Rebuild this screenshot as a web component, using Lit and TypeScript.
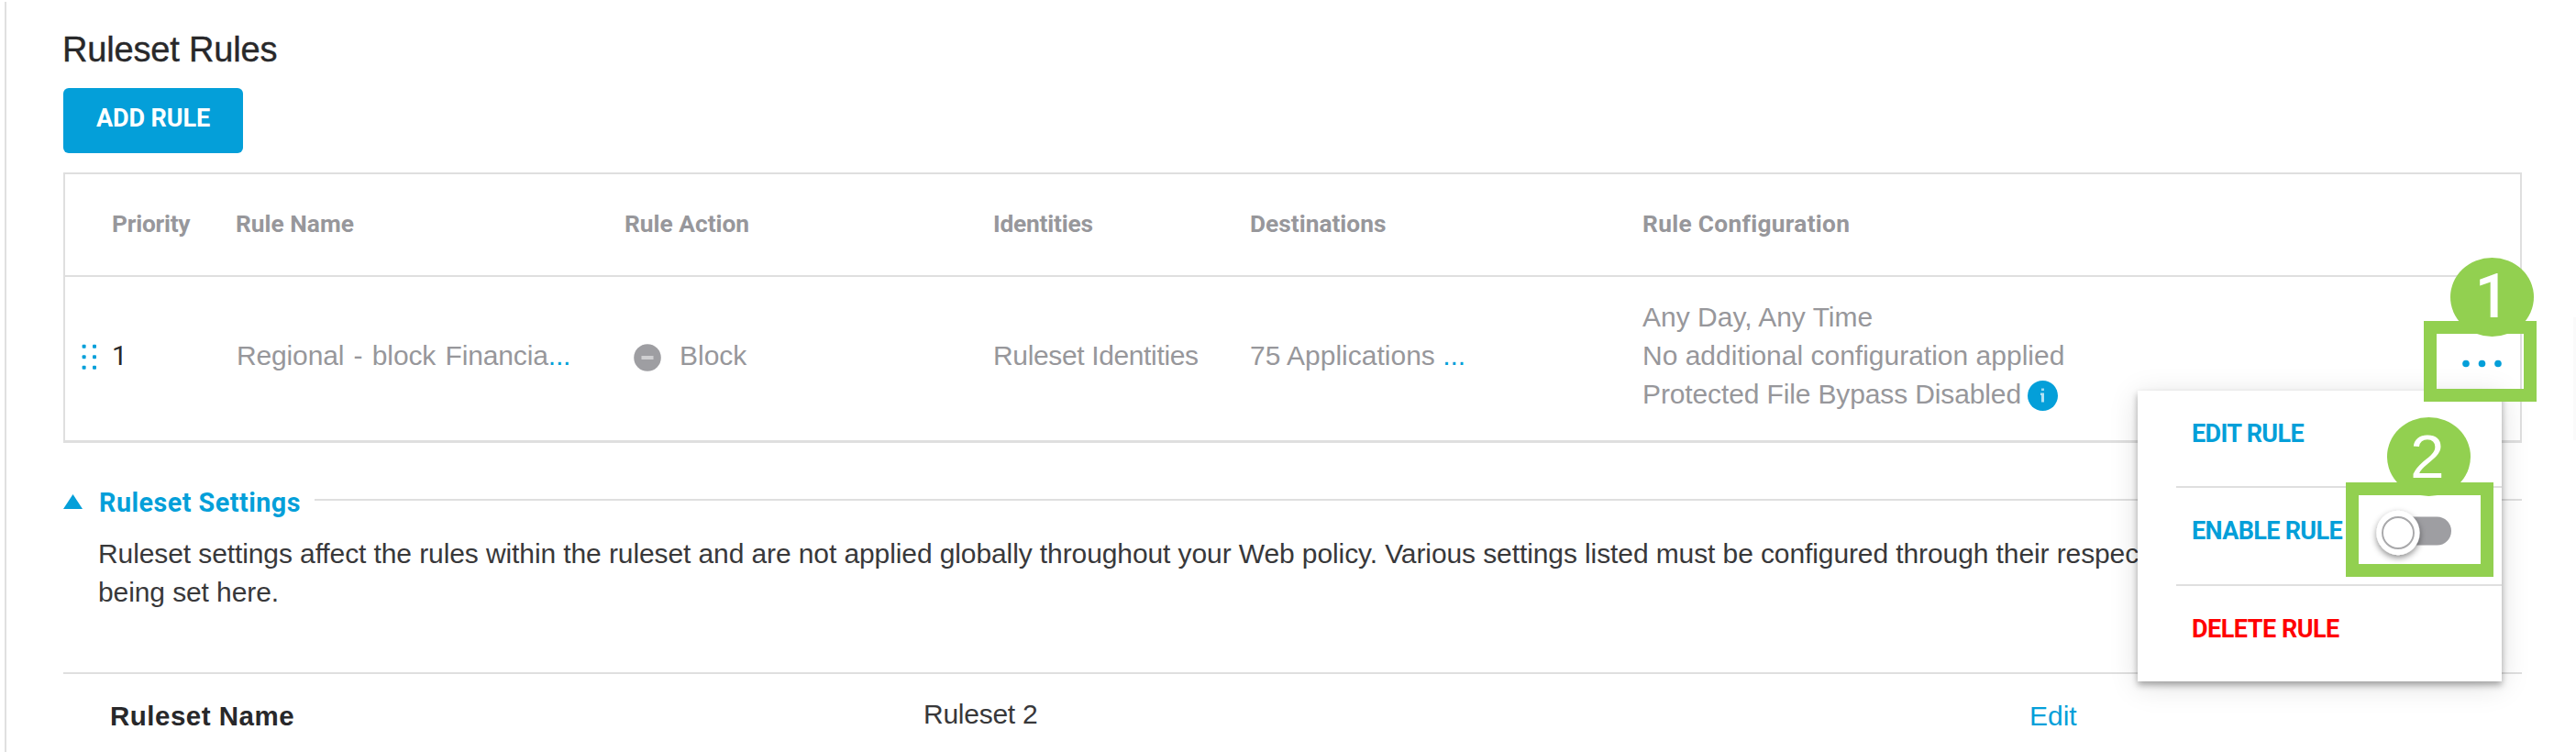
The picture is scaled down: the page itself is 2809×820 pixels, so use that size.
import { LitElement, html, css } from "lit";
import { customElement } from "lit/decorators.js";

@customElement("rule-menu")
class RuleMenu extends LitElement {
  static styles = css`
    :host {
      display: block;
      box-sizing: border-box;
      width: 397px;
      height: 317px;
      padding-left: 42px;
      background: #fff;
      box-shadow: 0 4px 7px rgba(0, 0, 0, 0.32), 0 5px 30px rgba(0, 0, 0, 0.13);
      font-family: Roboto, sans-serif;
    }
    .item {
      box-sizing: border-box;
      height: 106.5px;
      padding: 0 0 10px 17px;
      display: flex;
      align-items: center;
      font-weight: 700;
      font-size: 27px;
      line-height: 32px;
      letter-spacing: -0.66px;
      white-space: nowrap;
      color: #049fd9;
    }
    .item:first-child {
      height: 104px;
    }
    .item + .item {
      border-top: 2px solid #dfdfdf;
    }
    .danger {
      color: #f00;
      letter-spacing: -0.5px;
    }
    .toggle {
      display: block;
      margin: 6px 0 0 30px;
      overflow: visible;
    }
  `;
  render() {
    return html`
      <div class="item">EDIT RULE</div>
      <div class="item">
        <span>ENABLE RULE</span>
        <svg class="toggle" width="90" height="60" viewBox="0 0 90 60">
          <defs>
            <filter id="s" x="-40%" y="-40%" width="180%" height="190%">
              <feDropShadow dx="0" dy="3" stdDeviation="3.5" flood-color="#000" flood-opacity="0.45" />
            </filter>
          </defs>
          <rect x="17" y="11.5" width="72" height="31" rx="15.5" fill="#9e9ea2" />
          <ellipse cx="31" cy="29" rx="23.6" ry="24.2" fill="#fff" filter="url(#s)" />
          <circle cx="31" cy="29" r="17" fill="#fff" stroke="#a8a8aa" stroke-width="1.9" />
        </svg>
      </div>
      <div class="item danger">DELETE RULE</div>
    `;
  }
}

@customElement("app-root")
class AppRoot extends LitElement {
  static styles = css`
    :host {
      display: block;
      position: relative;
      box-sizing: border-box;
      width: 100%;
      height: 820px;
      padding: 2px 0 0 4.5px;
      overflow: hidden;
      background: #fff;
      font-family: "Liberation Sans", Arial, sans-serif;
      font-size: 30px;
      line-height: 42px;
      color: #38383a;
    }
    .page {
      box-sizing: border-box;
      height: 818px;
      border-left: 2px solid #e0e0e0;
      padding: 29px 59px 0 62.5px;
    }
    h1 {
      margin: 0;
      padding-top: 1px;
      margin-left: -1px;
      font-weight: 400;
      font-size: 38px;
      line-height: 44px;
      letter-spacing: -0.17px;
      color: #28282a;
      -webkit-text-stroke: 0.4px #28282a;
    }
    .add {
      display: flex;
      align-items: center;
      justify-content: center;
      box-sizing: border-box;
      width: 196px;
      height: 71px;
      margin: 20px 0 0;
      padding: 0 0 5px;
      border: 0;
      border-radius: 6px;
      background: #049fd9;
      color: #fff;
      font: 700 27px/32px Roboto, sans-serif;
      letter-spacing: -0.1px;
    }
    .table {
      box-sizing: border-box;
      height: 295px;
      margin-top: 21px;
      border: 2px solid #dfdfdf;
      border-bottom-width: 3px;
    }
    .row {
      display: grid;
      grid-template-columns: 50px 136px 424px 402px 280px 428px 1fr;
      align-items: center;
      box-sizing: border-box;
      white-space: nowrap;
    }
    .head {
      height: 112px;
      padding-bottom: 3px;
      border-bottom: 2px solid #dfdfdf;
      font: 700 26.3px/32px Roboto, sans-serif;
      color: #97979b;
    }
    .body {
      height: 178px;
      padding-bottom: 6px;
      color: #97979b;
    }
    .tight { letter-spacing: -0.22px; }
    .prio { padding-left: 1px; }
    .loose { letter-spacing: 0.3px; }
    .num {
      font-family: Roboto, sans-serif;
      font-size: 29.5px;
      color: #28282a;
      padding-left: 1px;
    }
    .grip {
      display: block;
      margin: 2px 0 0 18px;
    }
    .name { padding-left: 1px; letter-spacing: -0.15px; word-spacing: 2.2px; }
    .more { color: #049fd9; }
    .ident { letter-spacing: -0.36px; }
    .action {
      display: flex;
      align-items: center;
      gap: 20px;
      padding-left: 10px;
    }
    .minus { margin-top: 3px; }
    .by { display: flex; align-items: center; gap: 7px; letter-spacing: -0.13px; }
    .info { margin-top: 3px; }
    .settings {
      display: flex;
      align-items: center;
      height: 42px;
      margin-top: 41px;
    }
    .tri { margin: 3px 18px 0 0; }
    .legend {
      font: 700 28.7px/42px Roboto, sans-serif;
      letter-spacing: 0.5px;
      color: #049fd9;
      padding-top: 5px;
    }
    .rule {
      flex: 1;
      height: 2px;
      margin-left: 15px;
      background: #dfdfdf;
    }
    .desc {
      margin: 17px 0 0 38px;
      letter-spacing: -0.1px;
      white-space: nowrap;
    }
    .fields {
      display: grid;
      grid-template-columns: 888px 1206px 1fr;
      box-sizing: border-box;
      margin-top: 66px;
      padding: 25px 0 0 50px;
      border-top: 2px solid #dfdfdf;
    }
    .label {
      font-weight: 700;
      font-size: 29.5px;
      letter-spacing: 0.5px;
      color: #28282a;
      padding-left: 1px;
    }
    .value { margin-top: -2px; letter-spacing: -0.26px; }
    .edit { color: #049fd9; }
    .edge {
      position: absolute;
      right: 0;
      top: 346px;
      width: 3px;
      height: 134px;
      background: #fafafa;
    }
    .menu {
      position: absolute;
      left: 2331px;
      top: 426px;
    }
    .dots {
      position: absolute;
      left: 2684px;
      top: 391px;
    }
    .box {
      position: absolute;
      box-sizing: border-box;
      border: 14px solid #92d050;
    }
    .box1 { left: 2643px; top: 350px; width: 123px; height: 88px; }
    .box2 { left: 2558px; top: 526px; width: 161px; height: 103px; }
    .badge {
      position: absolute;
      display: flex;
      align-items: center;
      justify-content: center;
      box-sizing: border-box;
      width: 91px;
      height: 86px;
      border-radius: 50%;
      background: #92d050;
      color: #fff;
      font-size: 67px;
      line-height: 86px;
    }
    .b1 { left: 2672px; top: 281px; font-family: Roboto, sans-serif; font-size: 66px; font-weight: 500; }
    .b2 { left: 2603px; top: 455px; padding-right: 3px; }
  `;
  render() {
    const blue = "#049fd9";
    return html`
      <div class="page">
        <h1>Ruleset Rules</h1>
        <button class="add">ADD RULE</button>
        <div class="table">
          <div class="row head">
            <span></span>
            <span class="tight prio">Priority</span>
            <span>Rule Name</span>
            <span>Rule Action</span>
            <span class="tight">Identities</span>
            <span>Destinations</span>
            <span class="loose">Rule Configuration</span>
          </div>
          <div class="row body">
            <svg class="grip" width="20" height="30" viewBox="0 0 20 30" fill=${blue}>
              <rect x="0.6" y="1.7" width="4" height="4" rx="1" />
              <rect x="12" y="1.7" width="4" height="4" rx="1" />
              <rect x="0.6" y="13.2" width="4" height="4" rx="1" />
              <rect x="12" y="13.2" width="4" height="4" rx="1" />
              <rect x="0.6" y="24.7" width="4" height="4" rx="1" />
              <rect x="12" y="24.7" width="4" height="4" rx="1" />
            </svg>
            <span class="num">1</span>
            <span class="name">Regional - block Financia<span class="more">...</span></span>
            <span class="action">
              <svg class="minus" width="30" height="30" viewBox="0 0 30 30">
                <circle cx="15" cy="15" r="14.8" fill="#9e9ea2" />
                <rect x="8.5" y="13" width="13" height="4" fill="#cfcfd1" />
              </svg>
              <span>Block</span>
            </span>
            <span class="ident">Ruleset Identities</span>
            <span>75 Applications <span class="more">...</span></span>
            <div>
              <div>Any Day, Any Time</div>
              <div>No additional configuration applied</div>
              <div class="by">
                <span>Protected File Bypass Disabled</span>
                <svg class="info" width="33" height="33" viewBox="0 0 33 33">
                  <circle cx="16.5" cy="16.5" r="16.5" fill=${blue} />
                  <rect x="15" y="8.5" width="3" height="2.6" fill="#9bd9f0" />
                  <path d="M14 13.5h4v10h-3v-7.6h-1z" fill="#b4e2f4" />
                </svg>
              </div>
            </div>
          </div>
        </div>
        <div class="settings">
          <svg class="tri" width="21" height="16" viewBox="0 0 21 16">
            <path d="M10.5 0L21 16H0z" fill=${blue} />
          </svg>
          <span class="legend">Ruleset Settings</span>
          <span class="rule"></span>
        </div>
        <div class="desc">
          Ruleset settings affect the rules within the ruleset and are not applied globally throughout your Web policy. Various settings listed must be configured through their respective<br />being set here.
        </div>
        <div class="fields">
          <span class="label">Ruleset Name</span>
          <span class="value">Ruleset 2</span>
          <span class="edit">Edit</span>
        </div>
      </div>
      <div class="edge"></div>
      <rule-menu class="menu"></rule-menu>
      <svg class="dots" width="45" height="11" viewBox="0 0 45 11" fill=${blue}>
        <circle cx="5" cy="5.5" r="3.8" />
        <circle cx="22.5" cy="5.5" r="3.8" />
        <circle cx="40" cy="5.5" r="3.8" />
      </svg>
      <div class="badge b1">1</div>
      <div class="box box1"></div>
      <div class="badge b2">2</div>
      <div class="box box2"></div>
    `;
  }
}
